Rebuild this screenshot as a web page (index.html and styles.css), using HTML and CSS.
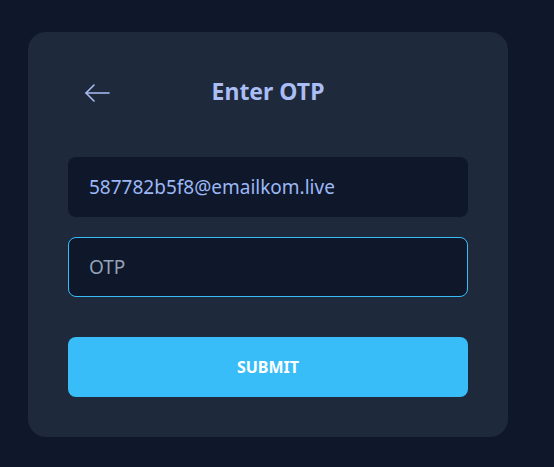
FILE: index.html
```html
<!DOCTYPE html>
<html lang="en">
<head>
<meta charset="utf-8">
<link rel="stylesheet" href="styles.css">
</head>
<body>
<main class="page">
  <section class="card">
    <header class="card-head">
      <button class="back" type="button" aria-label="Back">
        <svg width="28" height="22" viewBox="0 0 28 22" fill="none" stroke="currentColor" stroke-width="1.6" stroke-linecap="round" stroke-linejoin="round">
          <path d="M26 11H3"/>
          <path d="M11 3L3 11L11 19"/>
        </svg>
      </button>
      <h1 class="title">Enter OTP</h1>
    </header>
    <form class="form">
      <div class="field field-filled">587782b5f8@emailkom.live</div>
      <div class="field field-focus"><span class="placeholder">OTP</span></div>
      <button class="submit" type="button">SUBMIT</button>
    </form>
  </section>
</main>
</body>
</html>
```
FILE: styles.css
```css
* { box-sizing: border-box; }
html, body { margin: 0; padding: 0; }
body {
  background: #0f172a;
  font-family: "Noto Sans", "Open Sans", "DejaVu Sans", sans-serif;
  width: 554px;
  height: 467px;
  overflow: hidden;
}
.page {
  padding: 32px 0 0 28px;
}
.card {
  width: 480px;
  height: 405px;
  background: #1e293b;
  border-radius: 18px;
  padding: 40px 40px 0 40px;
}
.card-head {
  position: relative;
  height: 40px;
  display: flex;
  align-items: center;
  justify-content: center;
}
.back {
  position: absolute;
  left: 15px;
  top: 10px;
  background: none;
  border: 0;
  padding: 0;
  color: #aabdf5;
  display: flex;
  cursor: pointer;
}
.title {
  margin: 0;
  margin-top: -2px;
  font-size: 23px;
  font-weight: 700;
  color: #aabdf5;
  letter-spacing: 0;
}
.form {
  margin-top: 45px;
  display: flex;
  flex-direction: column;
  gap: 20px;
}
.field {
  height: 60px;
  border-radius: 8px;
  background: #0f172a;
  display: flex;
  align-items: center;
  padding: 0 21px;
  font-size: 19px;
  color: #9cb8f5;
}
.field-focus {
  border: 1px solid #38bdf8;
  padding: 0 20px;
}
.placeholder { color: #94a3b8; }
.submit {
  margin-top: 20px;
  height: 60px;
  border: 0;
  border-radius: 8px;
  background: #38bdf8;
  color: #ffffff;
  font-family: inherit;
  font-size: 16px;
  font-weight: 700;
}
```
